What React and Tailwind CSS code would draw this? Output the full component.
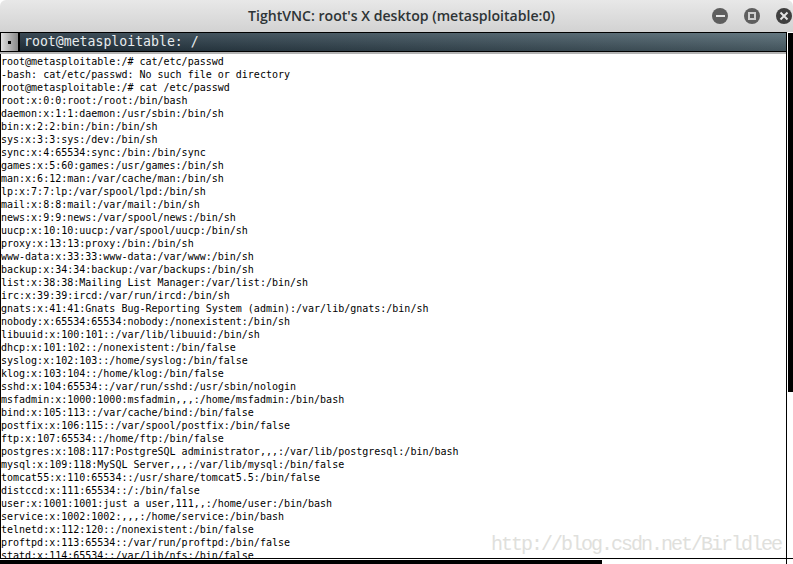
// TightVNC window showing a terminal with /etc/passwd
const lines = [
  'root@metasploitable:/# cat/etc/passwd',
  '-bash: cat/etc/passwd: No such file or directory',
  'root@metasploitable:/# cat /etc/passwd',
  'root:x:0:0:root:/root:/bin/bash',
  'daemon:x:1:1:daemon:/usr/sbin:/bin/sh',
  'bin:x:2:2:bin:/bin:/bin/sh',
  'sys:x:3:3:sys:/dev:/bin/sh',
  'sync:x:4:65534:sync:/bin:/bin/sync',
  'games:x:5:60:games:/usr/games:/bin/sh',
  'man:x:6:12:man:/var/cache/man:/bin/sh',
  'lp:x:7:7:lp:/var/spool/lpd:/bin/sh',
  'mail:x:8:8:mail:/var/mail:/bin/sh',
  'news:x:9:9:news:/var/spool/news:/bin/sh',
  'uucp:x:10:10:uucp:/var/spool/uucp:/bin/sh',
  'proxy:x:13:13:proxy:/bin:/bin/sh',
  'www-data:x:33:33:www-data:/var/www:/bin/sh',
  'backup:x:34:34:backup:/var/backups:/bin/sh',
  'list:x:38:38:Mailing List Manager:/var/list:/bin/sh',
  'irc:x:39:39:ircd:/var/run/ircd:/bin/sh',
  'gnats:x:41:41:Gnats Bug-Reporting System (admin):/var/lib/gnats:/bin/sh',
  'nobody:x:65534:65534:nobody:/nonexistent:/bin/sh',
  'libuuid:x:100:101::/var/lib/libuuid:/bin/sh',
  'dhcp:x:101:102::/nonexistent:/bin/false',
  'syslog:x:102:103::/home/syslog:/bin/false',
  'klog:x:103:104::/home/klog:/bin/false',
  'sshd:x:104:65534::/var/run/sshd:/usr/sbin/nologin',
  'msfadmin:x:1000:1000:msfadmin,,,:/home/msfadmin:/bin/bash',
  'bind:x:105:113::/var/cache/bind:/bin/false',
  'postfix:x:106:115::/var/spool/postfix:/bin/false',
  'ftp:x:107:65534::/home/ftp:/bin/false',
  'postgres:x:108:117:PostgreSQL administrator,,,:/var/lib/postgresql:/bin/bash',
  'mysql:x:109:118:MySQL Server,,,:/var/lib/mysql:/bin/false',
  'tomcat55:x:110:65534::/usr/share/tomcat5.5:/bin/false',
  'distccd:x:111:65534::/:/bin/false',
  'user:x:1001:1001:just a user,111,,:/home/user:/bin/bash',
  'service:x:1002:1002:,,,:/home/service:/bin/bash',
  'telnetd:x:112:120::/nonexistent:/bin/false',
  'proftpd:x:113:65534::/var/run/proftpd:/bin/false',
  'statd:x:114:65534::/var/lib/nfs:/bin/false',
];

function App() {
  return (
    <div className="w-[793px] h-[564px] overflow-hidden bg-white flex flex-col">
      {/* Window title bar */}
      <div className="h-[32px] shrink-0 rounded-t-[6px] bg-gradient-to-b from-[#e8e8e8] to-[#d2d2d2] flex items-center relative">
        <div className="flex-1 text-center pl-[10px] text-[14.1px] text-[#2e3436] font-['Open_Sans',sans-serif] font-semibold">
          TightVNC: root's X desktop (metasploitable:0)
        </div>
        <div className="absolute right-[1px] top-[8px] flex gap-[16px]">
          <div className="w-[16px] h-[16px] rounded-full bg-[#5e5e5e] flex items-center justify-center">
            <div className="w-[9px] h-[2.5px] bg-[#e4e4e4]"></div>
          </div>
          <div className="w-[16px] h-[16px] rounded-full bg-[#5e5e5e] flex items-center justify-center">
            <div className="w-[8px] h-[8px] border-2 border-[#cfcfcf]"></div>
          </div>
          <div className="w-[16px] h-[16px] rounded-full bg-[#3f3f3f] flex items-center justify-center">
            <svg width="10" height="10" viewBox="0 0 10 10">
              <path d="M1.5 1.5L8.5 8.5M8.5 1.5L1.5 8.5" stroke="#e4e4e4" strokeWidth="2" />
            </svg>
          </div>
        </div>
      </div>

      <div className="flex flex-1 min-h-0">
        {/* Terminal */}
        <div className="w-[787px] shrink-0 flex flex-col border-r border-black">
          <div className="h-[20px] shrink-0 border border-r-0 border-black flex bg-[linear-gradient(to_bottom,rgba(255,255,255,0.1),rgba(0,0,0,0.2)),linear-gradient(to_right,#22333f,#536872)]">
            <div className="w-[19px] h-full bg-gradient-to-r from-[#e0e0e0] to-[#8a8a8a] border-r-2 border-black flex items-center justify-center">
              <div className="w-[3px] h-[3px] bg-black"></div>
            </div>
            <div className="pl-[4px] text-[13.2px] leading-[18px] text-[#e8ecee] font-['DejaVu_Sans_Mono',monospace]">
              root@metasploitable: /
            </div>
          </div>
          <div className="h-[2px] shrink-0 bg-[#b4b4b4]"></div>
          <div className="flex-1 min-h-0 overflow-hidden border-l border-black relative pt-[1px]">
            {lines.map((line, i) => (
              <div key={i} className="h-[13px] text-[10px] leading-[13px] whitespace-pre text-black font-['DejaVu_Sans_Mono',monospace]">
                {line}
              </div>
            ))}
            {/* Blog watermark */}
            <div className="absolute right-[5px] bottom-[1px] text-[20px] leading-[24px] tracking-[-2px] text-[#e0e0dc] font-['Liberation_Mono',monospace]">
              http://blog.csdn.net/Birldlee
            </div>
          </div>
          <div className="h-[6px] shrink-0 border-t border-black bg-white">
            <div className="w-[602px] h-[4px] mt-[1px] bg-black"></div>
          </div>
        </div>
        {/* Vertical scrollbar */}
        <div className="flex-1 pl-[1px] flex flex-col">
          <div className="h-[359px] mt-[1px] bg-black"></div>
          <div className="flex-1"></div>
          <div className="h-[1px] bg-black mb-[5px] -ml-[1px]"></div>
        </div>
      </div>
    </div>
  );
}

export default App;
